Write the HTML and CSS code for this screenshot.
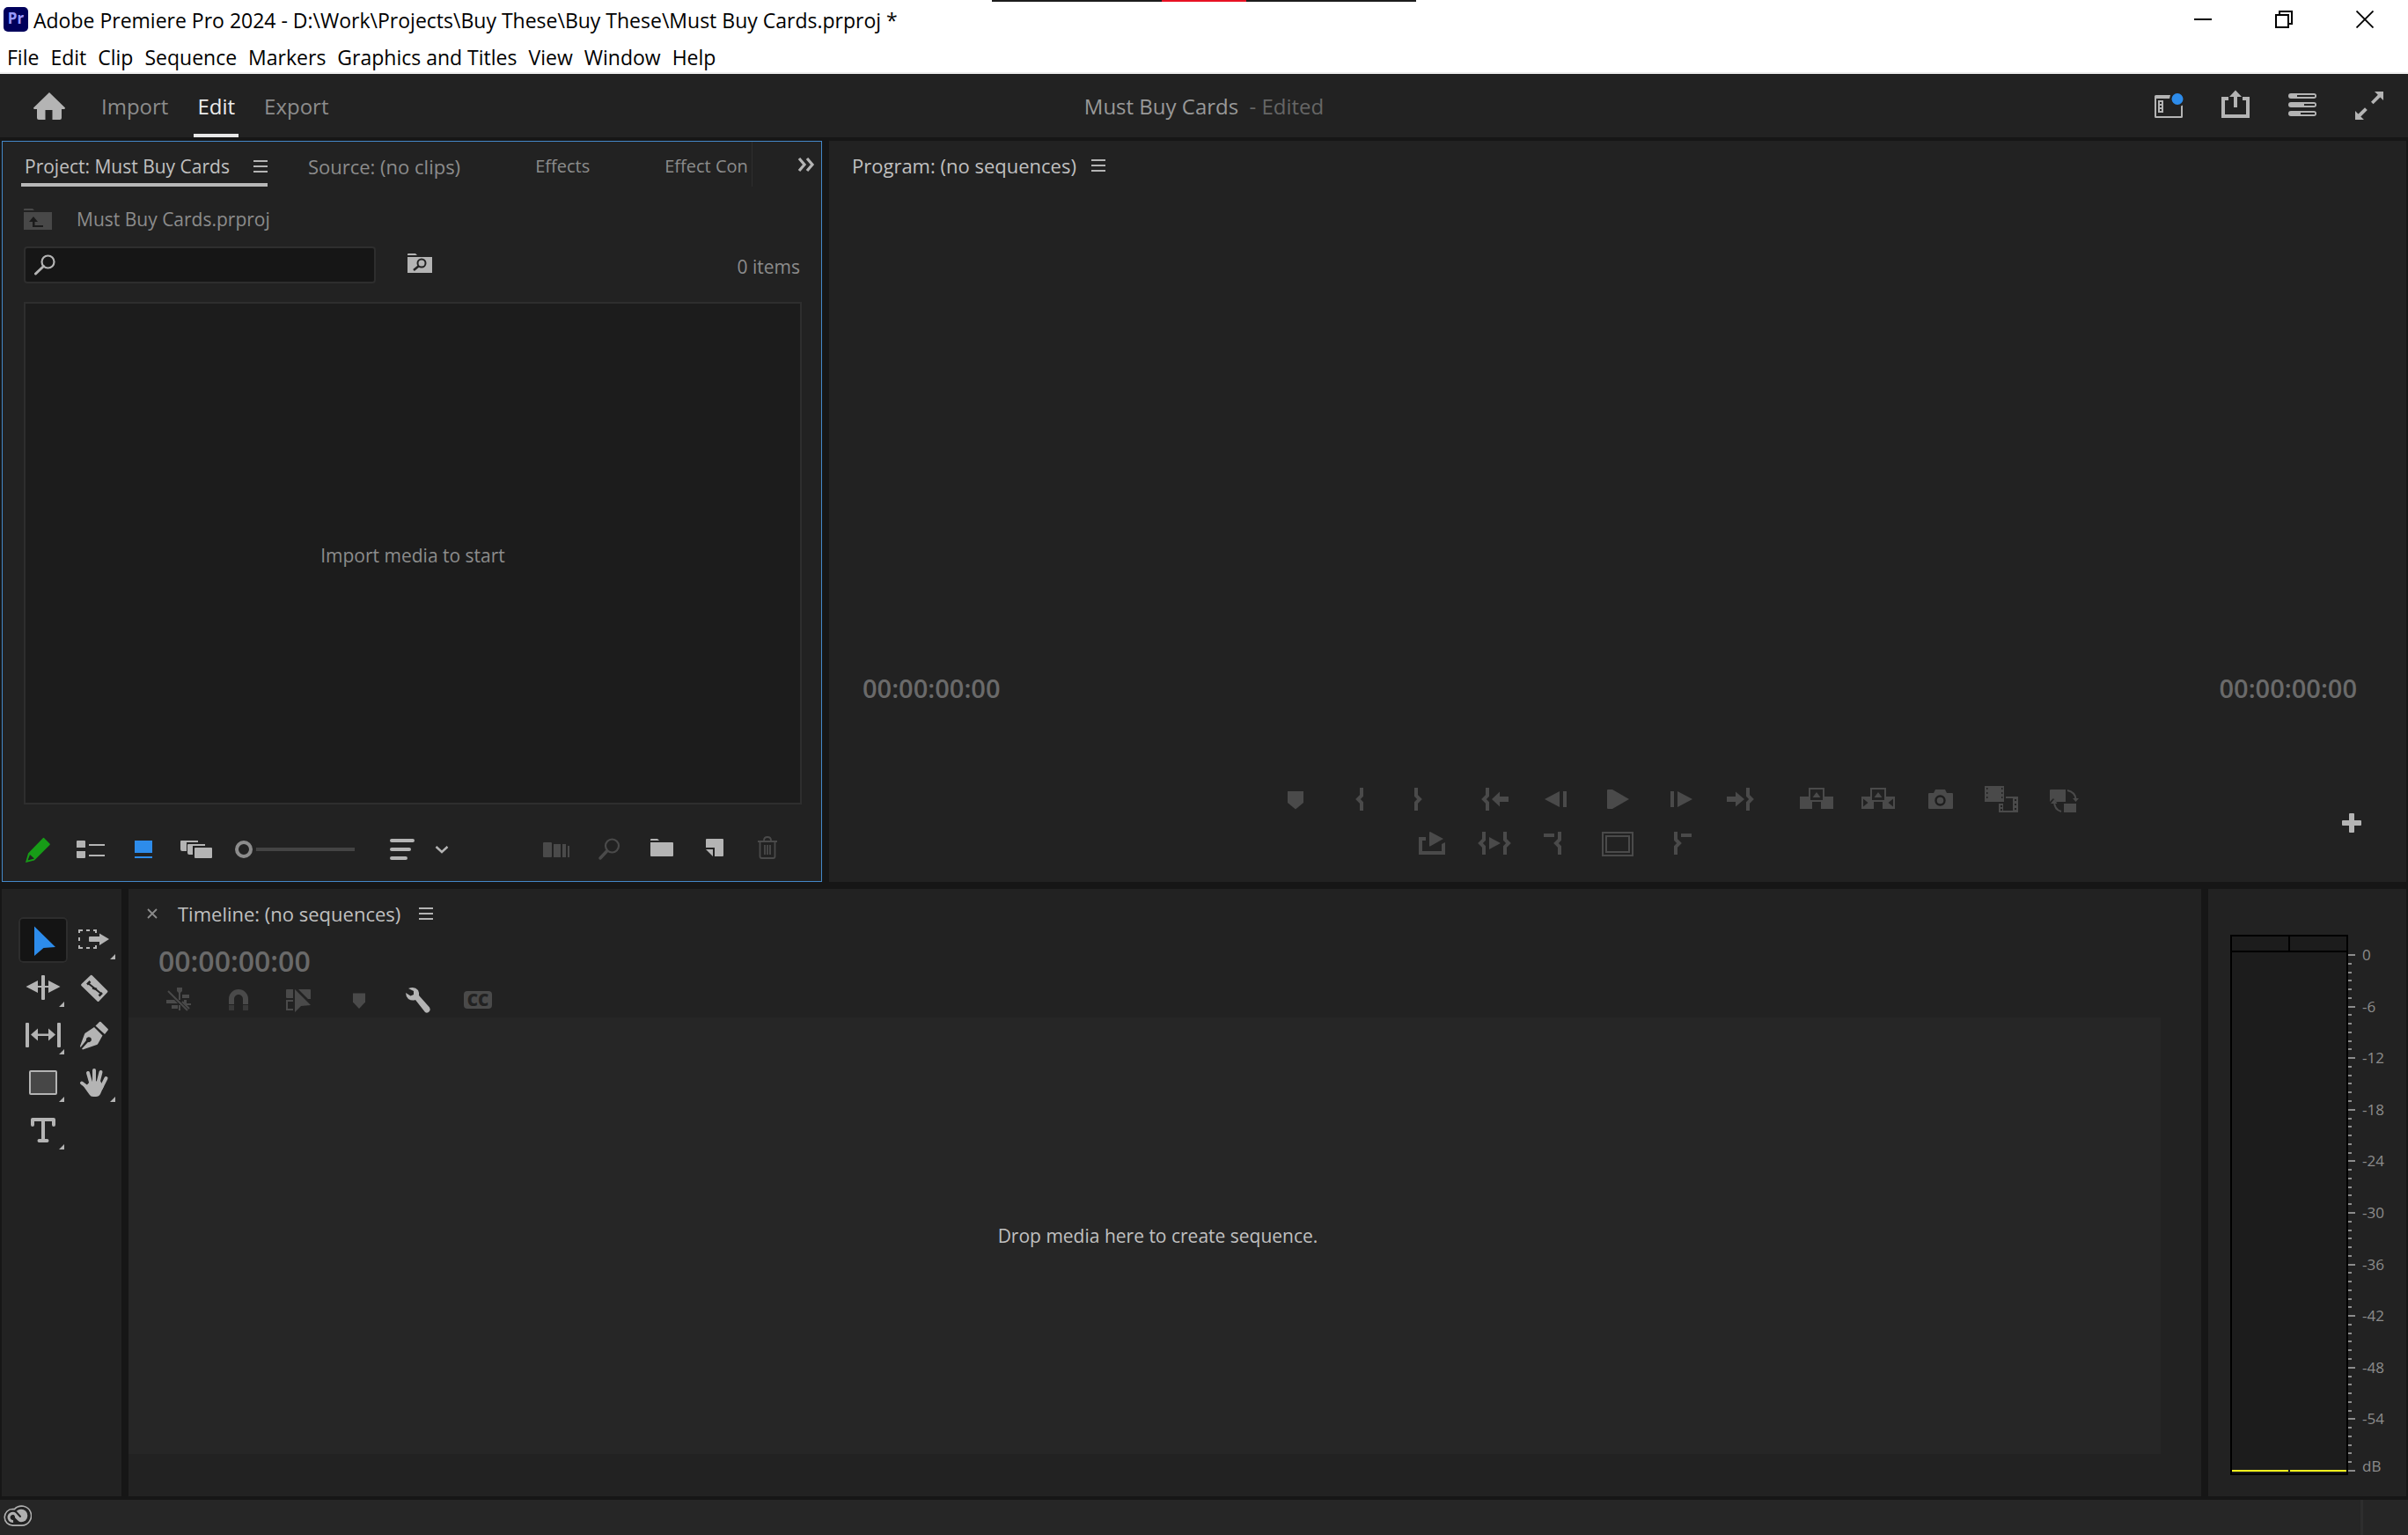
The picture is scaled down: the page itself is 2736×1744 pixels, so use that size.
FILE: index.html
```html
<!DOCTYPE html>
<html lang="en">
<head>
<meta charset="utf-8">
<title>Adobe Premiere Pro 2024</title>
<link rel="stylesheet" href="styles.css">
</head>
<body>
<header class="window-bar">
  <div class="title-row">
    <span class="app-logo">Pr</span>
    <h1 class="window-title">Adobe Premiere Pro 2024 - D:\Work\Projects\Buy These\Buy These\Must Buy Cards.prproj *</h1>
    <div class="window-buttons">
      <button class="window-button" aria-label="Minimize"><svg class="icon-20" viewBox="0 0 20 20"><path d="M0 9h20v2H0z"/></svg></button>
      <button class="window-button" aria-label="Restore"><svg class="icon-20" viewBox="0 0 20 20"><path d="M0 4h4V0h16v16h-4v4H0zM6 4h10v10h2V2H6zM2 6v12h12V6z" fill-rule="evenodd"/></svg></button>
      <button class="window-button" aria-label="Close"><svg class="icon-20" viewBox="0 0 20 20"><path d="M.5.5l19 19M19.500.5l-19 19" stroke="#000" stroke-width="1.800"/></svg></button>
    </div>
  </div>
  <nav class="menu-row">
    <button>File</button><button>Edit</button><button>Clip</button><button>Sequence</button><button>Markers</button><button>Graphics and Titles</button><button>View</button><button>Window</button><button>Help</button>
  </nav>
  <div class="capture-strip"></div>
</header>

<div class="app-header">
  <nav class="modes">
    <button class="home" aria-label="Home"><svg class="icon-40" viewBox="0 0 40 40"><path d="M20 5L2 22.500q0 1.500 1.500 1.500H6v10q0 2 2 2h7.500V25h8v11H32q2 0 2-2V24h2.500q1.500 0 1.500-1.500z"/></svg></button>
    <button class="mode">Import</button>
    <button class="mode mode-active">Edit</button>
    <button class="mode">Export</button>
  </nav>
  <p class="project-name">Must Buy Cards <span class="project-state">- Edited</span></p>
  <div class="header-tools">
    <button aria-label="Workspaces"><svg class="icon-40" viewBox="0 0 40 40"><path d="M4 9.500Q4 8 5.500 8H22l-1 4H6v20h28V20.500l2-1V32.500q0 1.500-1.500 1.500h-29Q4 34 4 32.500z"/><path d="M8 14h6v14H8zm2 2v2h2v-2zm0 4v2h2v-2zm0 4v2h2v-2z" fill-rule="evenodd"/><circle cx="30" cy="12.500" r="6.500" fill="#2d8ceb"/></svg></button>
    <button aria-label="Quick export"><svg class="icon-40" viewBox="0 0 40 40"><path d="M4 10h8v4H8v16h24V14h-4v-4h8v24H4z"/><path d="M20 2.500l7 7.500h-5v12h-4V10h-5z"/></svg></button>
    <button aria-label="Progress"><svg class="icon-40" viewBox="0 0 40 40"><path fill-rule="evenodd" d="M7 6h26a3 3 0 0 1 0 6H7a3 3 0 0 1 0-6zm7 2v2h20V8zM7 16h26a3 3 0 0 1 0 6H7a3 3 0 0 1 0-6zm15 2v2h12v-2zM7 26h26a3 3 0 0 1 0 6H7a3 3 0 0 1 0-6zm11 2v2h16v-2z"/></svg></button>
    <button aria-label="Full screen"><svg class="icon-40" viewBox="0 0 40 40"><path d="M26 4h10v10l-3.500-3.500-8 7.800-2.500-2.500 7.800-8zM4 36V26l3.500 3.500 7.500-7.300 2.800 2.800-7.500 7.500L14 36z"/></svg></button>
  </div>
</div>

<main class="workspace">
  <div class="row row-top">
    <section class="panel panel-focused">
      <div class="tab-bar">
        <div class="tabs">
          <div class="tab-current"><button class="tab tab-on">Project: Must Buy Cards</button><button class="panel-menu" aria-label="Panel menu"><svg class="icon-16" viewBox="0 0 16 16"><path d="M0 1h16v2H0zM0 7h16v2H0zM0 13h16v2H0z"/></svg></button></div>
          <button class="tab tab-source">Source: (no clips)</button>
          <button class="tab tab-effects">Effects</button>
          <button class="tab tab-effects">Effect Con</button>
        </div>
        <button class="more-tabs" aria-label="More tabs"><svg class="icon-20" viewBox="0 0 20 20"><path d="M2 3l6 7-6 7M11 3l6 7-6 7" fill="none" stroke="#b4b4b4" stroke-width="3.200"/></svg></button>
      </div>
      <div class="path-row">
        <svg class="icon-32" viewBox="0 0 32 32"><path d="M0 5q0-1 1-1h9l2 2H0zM0 8h32v20H0z" fill="#484848"/><path d="M11 13l5 6h-3.500v4H22v2H10v-6H6z" fill="#1b1b1b"/></svg>
        <span>Must Buy Cards.prproj</span>
      </div>
      <div class="search-row">
        <label class="search-box"><svg class="icon-24" viewBox="0 0 24 24"><circle cx="15.500" cy="8.500" r="7" fill="none" stroke="#b4b4b4" stroke-width="2.200"/><path d="M10.500 13.500l-9 8.500" stroke="#b4b4b4" stroke-width="3" stroke-linecap="round"/></svg><input type="text" aria-label="Search project"></label>
        <button aria-label="Filter bin items" class="bin-filter"><svg class="icon-28" viewBox="0 0 28 28"><path d="M0 4q0-1 1-1h8l2 2H0zM0 7h28v18H0z"/><circle cx="16" cy="14" r="4.500" fill="none" stroke="#222" stroke-width="2"/><path d="M13 17l-6 5" stroke="#222" stroke-width="2.500"/></svg></button>
        <span class="item-count">0 items</span>
      </div>
      <div class="media-area">Import media to start</div>
      <div class="project-tools">
        <button aria-label="Writable project"><svg class="icon-40" viewBox="0 0 40 40"><path d="M27 7l6.500 6.500q.8.800 0 1.600L16 32.500 6 35l3-10.500L25.500 7.500q.8-1 1.500-.5z" fill="#179c17"/><path d="M11 26l5 4.500-7.500 2z" fill="#222"/></svg></button>
        <button aria-label="List view"><svg class="icon-40" viewBox="0 0 40 40"><path d="M5 10h8q1 0 1 1v7H4v-7q0-1 1-1zM4 22h10v7q0 1-1 1H5q-1 0-1-1zM18 14h18v2H18zM18 26h18v2H18z"/></svg></button>
        <button aria-label="Icon view"><svg class="icon-40" viewBox="0 0 40 40"><path d="M10 10h20v14H10zM10 28h20v2H10z" fill="#2d8ceb"/></svg></button>
        <button aria-label="Freeform view"><svg class="icon-40" viewBox="0 0 40 40"><path d="M3 10h19v2H9v10H4q-2 0-2-2v-9q0-1 1-1zM11 14h19v2H16v10h-4q-2 0-2-2v-9q0-1 1-1zM19 18h18q1 0 1 1v10q0 1-1 1H19q-1 0-1-1V19q0-1 1-1z"/></svg></button>
        <input type="range" class="zoom-slider" min="0" max="100" value="0" aria-label="Thumbnail size">
        <button aria-label="Sort" class="sort"><svg class="icon-40" viewBox="0 0 40 40"><path d="M8 10h24M8 20h20M8 30h16" stroke="#b4b4b4" stroke-width="4" stroke-linecap="round"/></svg></button>
        <button aria-label="Sort options" class="sort-caret"><svg class="icon-16" viewBox="0 0 16 16"><path d="M1.500 5L8 11l6.500-6" fill="none" stroke="#b4b4b4" stroke-width="2.400"/></svg></button>
        <div class="project-actions">
          <button disabled aria-label="Automate to sequence"><svg class="icon-40" viewBox="0 0 40 40"><path d="M6 12h8q1 0 1 1v15q0 1-1 1H6q-1 0-1-1V13q0-1 1-1zM17 14h8v15h-8zM27 14h4v15h-4zM33 16h2v13h-2z"/></svg></button>
          <button disabled aria-label="Find"><svg class="icon-40" viewBox="0 0 40 40"><circle cx="23.500" cy="16" r="7.500" fill="none" stroke="#4a4a4a" stroke-width="2.200"/><path d="M17.500 22L10 30" stroke="#4a4a4a" stroke-width="3.500" stroke-linecap="round"/></svg></button>
          <button aria-label="New bin"><svg class="icon-40" viewBox="0 0 40 40"><path d="M7 9q0-1 1-1h7l2 2H7zM7 12h25q1 0 1 1v14q0 1-1 1H8q-1 0-1-1z"/></svg></button>
          <button aria-label="New item"><svg class="icon-40" viewBox="0 0 40 40"><path d="M10 9q0-1 1-1h18q1 0 1 1v18q0 1-1 1h-9v-10H10zM10 20h8v8z"/></svg></button>
          <button disabled aria-label="Delete"><svg class="icon-40" viewBox="0 0 40 40"><path d="M16 10q0-4 4-4t4 4M9 11h22M11.500 11v17q0 2 2 2h13q2 0 2-2V11M17 15v11M20 15v11M23 15v11" fill="none" stroke="#4a4a4a" stroke-width="1.800"/></svg></button>
        </div>
      </div>
    </section>

    <section class="panel program">
      <div class="panel-title"><h2>Program: (no sequences)</h2><button class="panel-menu" aria-label="Panel menu"><svg class="icon-16" viewBox="0 0 16 16"><path d="M0 1h16v2H0zM0 7h16v2H0zM0 13h16v2H0z"/></svg></button></div>
      <div class="monitor"></div>
      <div class="timecodes"><span>00:00:00:00</span><span>00:00:00:00</span></div>
      <div class="transport">
        <div class="transport-row">
          <div class="group group-left">
            <button disabled aria-label="Add marker"><svg class="icon-40" viewBox="0 0 40 40"><path d="M11 11h18v13l-9 7.500-9-7.500z"/></svg></button>
            <button disabled aria-label="Mark in"><svg class="icon-40 line" viewBox="0 0 40 40"><path d="M25 7v9l-4 4 4 4v9"/></svg></button>
            <button disabled aria-label="Mark out"><svg class="icon-40 line" viewBox="0 0 40 40"><path d="M17 7v9l4 4-4 4v9"/></svg></button>
          </div>
          <div class="group">
            <button disabled aria-label="Go to in"><svg class="icon-40" viewBox="0 0 40 40"><path class="stroke" d="M12 7v9l-4 4 4 4v9"/><path d="M17 20l9-8.500V17h10v6H26v5.500z"/></svg></button>
            <button disabled aria-label="Step back"><svg class="icon-40" viewBox="0 0 40 40"><path d="M7 20l17-9v18zM28 11h4v18h-4z"/></svg></button>
            <button disabled aria-label="Play"><svg class="icon-40" viewBox="0 0 40 40"><path d="M8 10q0-1 1-1h5l19 11-19 11H9q-1 0-1-1z"/></svg></button>
            <button disabled aria-label="Step forward"><svg class="icon-40" viewBox="0 0 40 40"><path d="M10 11h4v18h-4zM18 11l17 9-17 9z"/></svg></button>
            <button disabled aria-label="Go to out"><svg class="icon-40" viewBox="0 0 40 40"><path class="stroke" d="M28 7v9l4 4-4 4v9"/><path d="M4 17h10v-5.500L24 20l-10 8.500V23H4z"/></svg></button>
          </div>
          <div class="group">
            <button disabled aria-label="Lift"><svg class="icon-40" viewBox="0 0 40 40"><path fill-rule="evenodd" d="M1 17h10V7h18v10h10v14H25v-8H15v8H1zM13 9v12h14V9zM20 12l4.500 6h-9z"/></svg></button>
            <button disabled aria-label="Extract"><svg class="icon-40" viewBox="0 0 40 40"><path fill-rule="evenodd" d="M1 17h10V7h18v10h10v14H25v-8H15v8H1zM13 9v12h14V9zM20 12l4.500 6h-9zM3 19.500v9l5.500-4.500zM37 19.500v9L31.500 24z"/></svg></button>
            <button disabled aria-label="Export frame"><svg class="icon-40" viewBox="0 0 40 40"><path d="M8 13h5l2-4h11l2 4h6q1 0 1 1v16q0 1-1 1H8q-1 0-1-1V14q0-1 1-1z"/><circle cx="20.500" cy="21.500" r="5" fill="none" stroke="#1e1e1e" stroke-width="2.400"/></svg></button>
            <button disabled aria-label="Comparison view"><svg class="icon-40" viewBox="0 0 40 40"><path fill-rule="evenodd" d="M1 5h22v18H1zM3 7v2h1.500V7zm0 5v2h1.500v-2zm0 5v2h1.500v-2zM20 7v2h1.500V7zm0 5v2h1.500v-2zm0 5v2h1.500v-2zM25 17h14v18H17V25h5v8h11V19h-8zM35 20v2h2v-2zm0 5v2h2v-2zm0 5v2h2v-2zM19 27v2h2v-2zm0 4v2h2v-2z"/></svg></button>
            <button disabled aria-label="Proxies"><svg class="icon-40" viewBox="0 0 40 40"><path d="M5 10q0-1 1-1h17v14H12l-3-4-4 4zM21 25h14v10H21z"/><path d="M25 10q9 2 9.500 10M18 34q-8-2-8-12" fill="none" stroke="#4a4a4a" stroke-width="2"/><path d="M31 19h7l-3.500 4zM6 25h7.500L10 20z"/></svg></button>
          </div>
        </div>
        <div class="transport-row transport-row-2">
          <div class="group group-left">
            <button disabled aria-label="Loop"><svg class="icon-40" viewBox="0 0 40 40"><path d="M4 13h8v4H8v12h22v-8l4-2v14H4zM16 8q0-1 1-1l15 8-15 8.500h-1z"/></svg></button>
          </div>
          <div class="group">
            <button disabled aria-label="Play in to out"><svg class="icon-40" viewBox="0 0 40 40"><path class="stroke" d="M8 7v9l-4 4 4 4v9M32 7v9l4 4-4 4v9"/><path d="M14 13l13 7-13 7z"/></svg></button>
            <button disabled aria-label="Clear in"><svg class="icon-40 line" viewBox="0 0 40 40"><path d="M6 11h12M24 7v9l-4 4 4 4v9"/></svg></button>
            <button disabled aria-label="Safe margins"><svg class="icon-40" viewBox="0 0 40 40"><path fill-rule="evenodd" d="M2 7h36v28H2zM4 9v24h32V9zM6 11h28v20H6zM8 13v16h24V13z"/></svg></button>
            <button disabled aria-label="Clear out"><svg class="icon-40 line" viewBox="0 0 40 40"><path d="M16 7v9l4 4-4 4v9M22 11h12"/></svg></button>
            <span class="slot"></span>
          </div>
          <div class="group"></div>
        </div>
        <button class="button-editor" aria-label="Button editor"><svg class="icon-24" viewBox="0 0 24 24"><path d="M9 2q0-1 1-1h4q1 0 1 1v7h7q1 0 1 1v4q0 1-1 1h-7v7q0 1-1 1h-4q-1 0-1-1v-7H2q-1 0-1-1v-4q0-1 1-1h7z"/></svg></button>
      </div>
    </section>
  </div>

  <div class="row row-bottom">
    <section class="panel toolbox">
      <button class="tool tool-on" aria-label="Selection"><svg class="icon-54" viewBox="0 0 54 54"><path d="M17 11.500L41 35l-13.500 1L17 45z" fill="#2d8ceb"/></svg></button>
      <button class="tool" aria-label="Track select forward"><svg class="icon-54" viewBox="0 0 54 54"><path d="M10 19v-3h4M18 16h4M26 16h3v3M10 24v4M10 33v3h4M18 36h4M26 36h3v-3" fill="none" stroke="#b4b4b4" stroke-width="2"/><path d="M22 23h11v-3.500L44 26l-11 7v-4H22q-1 0-1-1v-4q0-1 1-1zM51 43v6h-6z"/></svg></button>
      <button class="tool" aria-label="Ripple edit"><svg class="icon-54" viewBox="0 0 54 54"><path d="M25 14q0-1 1-1h2q1 0 1 1v26q0 1-1 1h-2q-1 0-1-1zM7.500 26L21 19v14zM33 19l13.500 7L33 33zM21 25h12v2H21zM51 43v6h-6z"/></svg></button>
      <button class="tool" aria-label="Razor"><svg class="icon-54" viewBox="0 0 54 54"><path d="M23 13q1-.5 2 .5l17 17q1 1 0 2L32.500 42.500q-1 1-2 0L12.500 25q-1-1 0-2z"/><path d="M20 22l15 12" stroke="#222" stroke-width="2"/><path d="M19 23.500l3.500-3.500M32.500 36.500l3.500-3.500M25 27.500l5 1.500" stroke="#222" stroke-width="2.500"/></svg></button>
      <button class="tool" aria-label="Slip"><svg class="icon-54" viewBox="0 0 54 54"><path d="M7 14q0-1 1-1h2q1 0 1 1v26q0 1-1 1H8q-1 0-1-1zM43 14q0-1 1-1h2q1 0 1 1v26q0 1-1 1h-2q-1 0-1-1zM13 26.500l8-7v6h12v-6l8 7-8 7v-5.500H21v5.500zM51 43v6h-6z"/></svg></button>
      <button class="tool" aria-label="Pen"><svg class="icon-54" viewBox="0 0 54 54"><path d="M33 12q.8-.6 1.600 0l8 8q.8.800 0 1.600L39 26l-10.500-9.500zM27 18l9.500 9.500-5 9q-.5 1-1.500 1.500L14 43.500l-1-1 7-7.500a3 3 0 1 0-2-2L11.500 41l-.5-1.500L16 26q.5-1.500 2-2z"/></svg></button>
      <button class="tool" aria-label="Rectangle"><svg class="icon-54" viewBox="0 0 54 54"><rect x="12" y="14" width="30" height="26" rx="1" fill="#474747" stroke="#b4b4b4" stroke-width="2"/><path d="M51 43v6h-6z"/></svg></button>
      <button class="tool" aria-label="Hand"><svg class="icon-54" viewBox="0 0 54 54"><path d="M13 27.500l8 6M20 16l4 14M27 13v15M34.500 15L31 29M40.500 22L35 33" fill="none" stroke="#b4b4b4" stroke-width="4" stroke-linecap="round"/><path d="M22 26l12-1 3.500 7-3.500 8q-1.500 3-5 3h-3q-3 0-4.500-2.500L14 30l4 .5z"/><path d="M51 43v6h-6z"/></svg></button>
      <button class="tool" aria-label="Type"><svg class="icon-54" viewBox="0 0 54 54"><path d="M15 21v-6h24v6M27 15v24M22.500 39h9" fill="none" stroke="#b4b4b4" stroke-width="4" stroke-linecap="round" stroke-linejoin="round"/><path d="M51 43v6h-6z"/></svg></button>
    </section>

    <section class="panel timeline">
      <div class="timeline-title"><button class="close-tab" aria-label="Close panel"><svg class="icon-12" viewBox="0 0 12 12"><path d="M1 1l10 10M11 1L1 11" stroke="#8c8c8c" stroke-width="1.800"/></svg></button><h2>Timeline: (no sequences)</h2><button class="panel-menu" aria-label="Panel menu"><svg class="icon-16" viewBox="0 0 16 16"><path d="M0 1h16v2H0zM0 7h16v2H0zM0 13h16v2H0z"/></svg></button></div>
      <div class="playhead-time">00:00:00:00</div>
      <div class="timeline-tools">
        <button disabled aria-label="Insert as nests"><svg class="icon-40" viewBox="0 0 40 40"><path d="M18 6h6v4l-2 2v8h-2v-8l-2-2zM24 14h8v4h-8zM6 20h9l4 4H6zM12 26h7v4h-7zM26 20h3v4h-3zM20 26h2v6h-2z"/><path d="M8 10l22 22M24 22l8 8M28 25h6" stroke="#4a4a4a" stroke-width="2"/></svg></button>
        <button disabled aria-label="Snap"><svg class="icon-40" viewBox="0 0 40 40"><path d="M9 25v-6a11 11 0 0 1 22 0v6h-6v-6a5 5 0 0 0-10 0v6z"/><path d="M9 26h6v6H9zM25 26h6v6h-6z" opacity=".6"/></svg></button>
        <button disabled aria-label="Linked selection"><svg class="icon-40" viewBox="0 0 40 40"><path d="M7 8h7v10H7q-1 0-1-1V9q0-1 1-1zM20 8h13q1 0 1 1v10h-3zM6 20h8v2H8v8h6v2H6zM16 8l18 18-11 1-7 7z"/></svg></button>
        <button disabled aria-label="Add marker"><svg class="icon-40" viewBox="0 0 40 40"><path d="M14 12.500h14v10L21 30l-7-7.500z"/></svg></button>
        <button aria-label="Timeline settings"><svg class="icon-40" viewBox="0 0 40 40"><path d="M9 7q7-3 11 2 1.500 3 1 6l12 13.500q1.500 2.500 0 4.500-2.500 3-5 1L17 20q-4 1.500-8-1-3-3-3-7l5.500 3.500 3.500-1.500v-4z"/></svg></button>
        <button disabled class="captions" aria-label="Captions">CC</button>
      </div>
      <div class="drop-area">Drop media here to create sequence.</div>
    </section>

    <section class="panel meters">
      <div class="meter">
        <div class="peaks"><span></span><span></span></div>
        <div class="levels"><span></span><span></span></div>
      </div>
      <ol class="scale">
        <li><span class="ticks"><i></i><i></i><i></i><i></i><i></i><i></i></span><b>0</b></li>
        <li><span class="ticks"><i></i><i></i><i></i><i></i><i></i><i></i></span><b>-6</b></li>
        <li><span class="ticks"><i></i><i></i><i></i><i></i><i></i><i></i></span><b>-12</b></li>
        <li><span class="ticks"><i></i><i></i><i></i><i></i><i></i><i></i></span><b>-18</b></li>
        <li><span class="ticks"><i></i><i></i><i></i><i></i><i></i><i></i></span><b>-24</b></li>
        <li><span class="ticks"><i></i><i></i><i></i><i></i><i></i><i></i></span><b>-30</b></li>
        <li><span class="ticks"><i></i><i></i><i></i><i></i><i></i><i></i></span><b>-36</b></li>
        <li><span class="ticks"><i></i><i></i><i></i><i></i><i></i><i></i></span><b>-42</b></li>
        <li><span class="ticks"><i></i><i></i><i></i><i></i><i></i><i></i></span><b>-48</b></li>
        <li><span class="ticks"><i></i><i></i><i></i><i></i><i></i><i></i></span><b>-54</b></li>
        <li class="scale-end"><span class="ticks"><i></i></span><b>dB</b></li>
      </ol>
    </section>
  </div>
</main>

<footer class="status-bar">
  <svg class="cloud" viewBox="0 0 32 24"><path d="M10.500 4.500a9.300 9.300 0 0 0 0 18.600H20A11 11 0 1 0 12.500 4.600z" fill="#222" stroke="#b0b0b0" stroke-width="1.600"/><circle cx="20" cy="12" r="7.300"/><path d="M11 18.500a4.600 4.600 0 1 1 2-8.500l7.500 7.500" fill="none" stroke="#b0b0b0" stroke-width="3.200"/><path d="M14 7.500l5 5.500M10.500 13.500l6.500 6" fill="none" stroke="#222" stroke-width="2" stroke-linecap="round"/></svg>
  <span class="status-grip"></span>
</footer>
</body>
</html>
```
FILE: styles.css
```css
* { box-sizing: border-box; }

body {
  margin: 0;
  min-height: 100vh;
  display: flex;
  flex-direction: column;
  background: #161616;
  color: #8c8c8c;
  font: 21px/28px "Open Sans", "Noto Sans", sans-serif;
}

button {
  margin: 0;
  padding: 0;
  border: 0;
  background: none;
  color: inherit;
  font: inherit;
  white-space: nowrap;
}

h1, h2, p, ol { margin: 0; padding: 0; font: inherit; }

svg { display: block; flex: none; fill: #b4b4b4; }
button:disabled svg { fill: #4a4a4a; }
.line path, .stroke { fill: none; stroke: #4a4a4a; stroke-width: 4px; }
.icon-12 { width: 12px; height: 12px; }
.icon-16 { width: 16px; height: 16px; }
.icon-20 { width: 20px; height: 20px; }
.icon-24 { width: 24px; height: 24px; }
.icon-28 { width: 28px; height: 28px; }
.icon-32 { width: 32px; height: 32px; }
.icon-40 { width: 40px; height: 40px; }
.icon-54 { width: 54px; height: 54px; }

/* Window title and menus */
.window-bar {
  position: relative;
  background: #fff;
  color: #000;
  border-bottom: 2px solid #f0f0f0;
  font-size: 23px;
}
.title-row { display: flex; align-items: center; height: 44px; padding: 0 3px 0 4px; }
.app-logo {
  width: 28px;
  height: 28px;
  margin-right: 6px;
  border-radius: 5px;
  background: #00005b;
  color: #9999ff;
  font-size: 17px;
  font-weight: 700;
  line-height: 26px;
  text-align: center;
}
.window-title { flex: 1; padding-top: 2px; }
.window-buttons { display: flex; }
.window-button { width: 92px; height: 42px; display: grid; place-items: center; }
.window-button svg { fill: #000; }
.menu-row { display: flex; gap: 13px; height: 38px; padding: 0 8px; }
.menu-row button { line-height: 42px; }
.capture-strip {
  position: absolute;
  top: 0;
  left: 1127px;
  width: 482px;
  height: 2px;
  background: linear-gradient(90deg, #1c1c1c 40%, #e81123 40% 60%, #1c1c1c 60%);
}

/* Import / Edit / Export header */
.app-header {
  display: grid;
  grid-template-columns: 1fr auto 1fr;
  height: 72px;
  margin-bottom: 4px;
  background: #222;
  font-size: 24px;
}
.modes { display: flex; padding-left: 36px; }
.home { margin-right: 35px; }
.mode { padding: 6px 4px 0; margin-right: 25px; border-bottom: 4px solid transparent; }
.mode-active { color: #ececec; border-bottom-color: #e8e8e8; }
.project-name { align-self: center; padding-top: 2px; color: #999; }
.project-state { color: #666; margin-left: 6px; }
.header-tools { display: flex; justify-content: flex-end; padding-right: 6px; }
.header-tools button { width: 76px; display: grid; place-items: center; }

/* Panels */
.workspace {
  flex: 1;
  display: grid;
  grid-template-rows: 421fr 345fr;
  gap: 8px;
  padding: 0 2px;
}
.row { display: grid; gap: 8px; }
.row-top { grid-template-columns: 233fr 448fr; }
.row-bottom { grid-template-columns: 136px 1fr 225px; }
.panel { min-width: 0; background: #222; display: flex; flex-direction: column; }
.panel-focused { border: 1px solid #4488c8; }
.panel h2 { color: #c0c0c0; font-size: 22px; }
.panel-title { display: flex; align-items: center; gap: 17px; height: 58px; padding: 0 0 2px 26px; }

/* Project panel */
.tab-bar { display: flex; height: 51px; }
.tabs {
  flex: 1;
  display: flex;
  min-width: 0;
  overflow: hidden;
  padding-left: 21px;
  border-right: 1px solid #2e2e2e;
}
.tab-current {
  display: flex;
  align-items: center;
  gap: 27px;
  padding: 8px 0 0 4px;
  margin-right: 46px;
  border-bottom: 4px solid #b8b8b8;
}
.tab { padding-top: 4px; }
.tab-current .tab { padding: 0; }
.tab-on { color: #c0c0c0; }
.tab-source { font-size: 22px; }
.tab-effects { margin-left: 85px; font-size: 20px; }
.more-tabs { width: 78px; padding-left: 51px; }
.path-row { display: flex; align-items: center; gap: 28px; height: 44px; margin-top: 15px; padding-left: 24px; }
.search-row { display: flex; align-items: center; height: 42px; margin-top: 9px; padding: 0 24px; }
.search-box {
  display: flex;
  align-items: center;
  width: 400px;
  height: 42px;
  padding: 0 10px;
  gap: 8px;
  border: 2px solid #2e2e2e;
  border-radius: 4px;
  background: #161616;
}
.search-box input { flex: 1; min-width: 0; border: 0; outline: 0; background: none; color: #c0c0c0; font: inherit; }
.bin-filter { margin-left: 36px; padding-bottom: 4px; }
.item-count { margin-left: auto; padding-top: 4px; }
.media-area {
  flex: 1;
  display: grid;
  place-items: center;
  margin: 21px 22px 0 24px;
  padding-top: 4px;
  border: 2px solid #2e2e2e;
  background: #1c1c1c;
}
.project-tools { display: flex; align-items: center; height: 87px; padding: 15px 31px 0 10px; }
.project-tools button { width: 60px; display: grid; place-items: center; }
.project-tools .sort { margin-left: 24px; }
.project-tools .sort-caret { width: 30px; }
.project-actions { display: flex; margin-left: auto; }
.zoom-slider {
  appearance: none;
  width: 136px;
  height: 20px;
  margin: 0 0 0 14px;
  background: linear-gradient(#444, #444) center / 100% 4px no-repeat;
}
.zoom-slider::-webkit-slider-thumb {
  appearance: none;
  width: 20px;
  height: 20px;
  border: 4px solid #8c8c8c;
  border-radius: 50%;
  background: #222;
  box-shadow: 2px 0 0 2px #222;
}

/* Program monitor */
.monitor { flex: 1; }
.timecodes {
  display: flex;
  justify-content: space-between;
  padding: 0 56px 0 38px;
  color: #6a6a6a;
  font-size: 29px;
  font-weight: 600;
  line-height: 40px;
}
.transport { position: relative; margin-top: 81px; padding-bottom: 19px; }
.transport-row { display: grid; grid-template-columns: 1fr auto 1fr; gap: 16px; height: 50px; }
.transport-row-2 { column-gap: 0; }
.group { display: flex; }
.group-left { justify-content: flex-end; }
.group button, .slot { width: 70px; display: grid; place-items: center; }
.button-editor { position: absolute; right: 50px; top: 40px; }

/* Tools */
.toolbox {
  display: grid;
  grid-template-columns: 58px 58px;
  grid-auto-rows: 54px;
  align-content: start;
  padding: 31px 0 0 18px;
}
.tool { display: grid; place-items: center; }
.tool-on { margin: 1px; border-radius: 5px; background: #141414; box-shadow: inset 0 0 0 2px #2d2d2d; }
.tool-on svg { margin: -1px; }

/* Timeline */
.timeline-title { display: flex; align-items: center; height: 58px; padding: 0 0 2px 21px; }
.close-tab { margin-right: 23px; }
.timeline-title .panel-menu { margin-left: 21px; }
.playhead-time {
  padding-left: 34px;
  color: #6a6a6a;
  font-size: 32px;
  font-weight: 600;
  line-height: 48px;
}
.timeline-tools { display: flex; height: 40px; padding-left: 23px; }
.timeline-tools button { width: 68px; display: grid; place-items: center; }
.timeline-tools .captions {
  width: 32px;
  height: 20px;
  margin: 10px 18px;
  border-radius: 4px;
  background: #4a4a4a;
  color: #222;
  font-size: 19px;
  font-weight: 800;
  line-height: 20px;
}
.drop-area {
  flex: 1;
  display: grid;
  place-items: center;
  margin: 0 46px 48px 0;
  padding-left: 30px;
  background: #262626;
  color: #c0c0c0;
}

/* Audio meters */
.meters { flex-direction: row; padding: 52px 0 24px 25px; }
.meter { width: 134px; display: flex; flex-direction: column; border: 2px solid #000; background: #1c1c1c; }
.peaks { display: flex; height: 18px; border-bottom: 2px solid #000; }
.peaks span { flex: 1; }
.peaks span + span { border-left: 2px solid #000; }
.levels { flex: 1; display: flex; align-items: flex-end; gap: 2px; padding-bottom: 2px; }
.levels span { flex: 1; height: 2px; background: #f5f51e; }
.scale { flex: 1; display: flex; flex-direction: column; padding: 22px 0 4px; list-style: none; }
.scale li { flex: 1; display: flex; gap: 8px; }
.scale .scale-end { flex: none; height: 2px; }
.ticks { display: flex; flex-direction: column; width: 8px; }
.ticks i { flex: 1; width: 4px; border-top: 2px solid #8c8c8c; }
.ticks i:first-child { width: 8px; }
.scale b { color: #8c8c8c; font-size: 17px; font-weight: 400; line-height: 2px; }
.scale-end b { margin-top: -5px; }

/* Status bar */
.status-bar {
  display: flex;
  align-items: flex-start;
  justify-content: space-between;
  height: 40px;
  margin-top: 4px;
  padding: 6px 51px 0 4px;
  background: #262626;
}
.cloud { width: 32px; height: 24px; fill: #b0b0b0; }
.status-grip { width: 3px; height: 40px; margin-top: -6px; background: #2e2e2e; }
```
